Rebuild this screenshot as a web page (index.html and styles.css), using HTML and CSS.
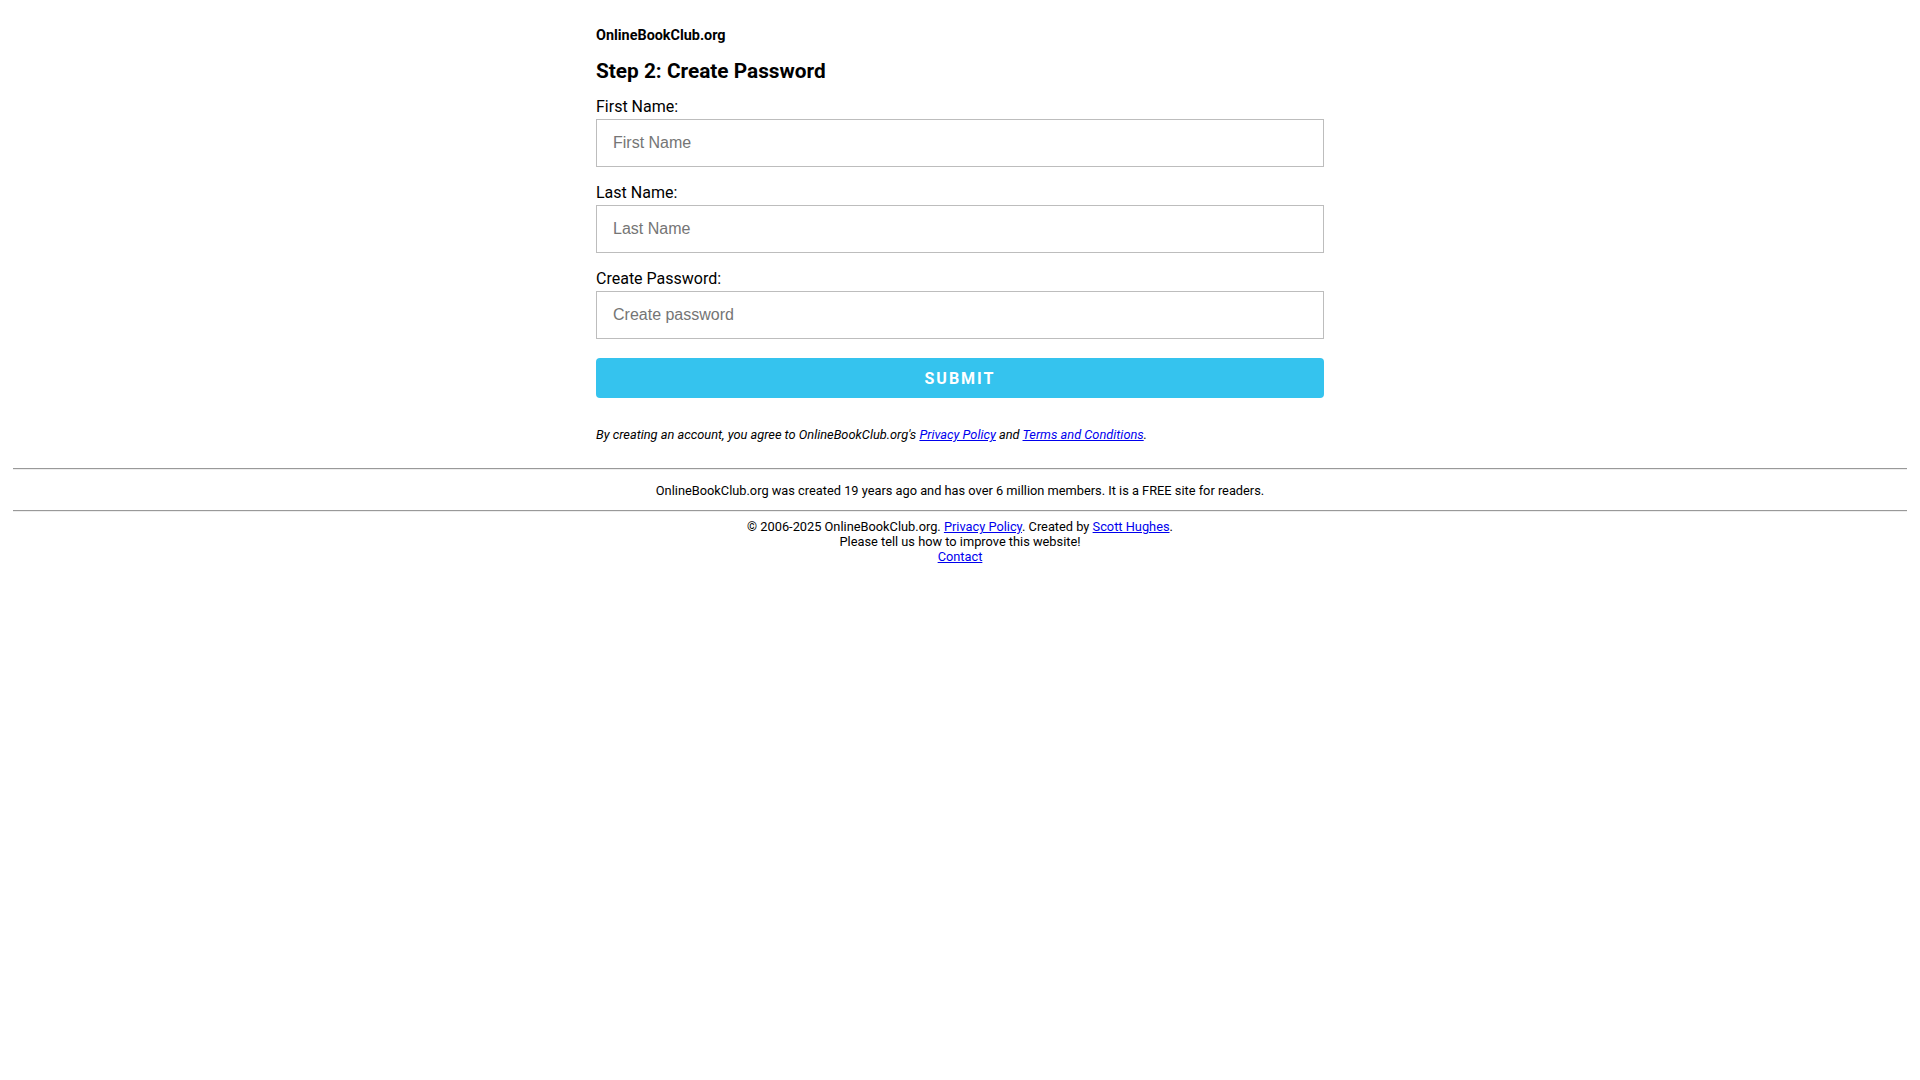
FILE: index.html
```html
<!DOCTYPE html>
<html lang="en">
<head>
<meta charset="utf-8">
<title>Step 2: Create Password - OnlineBookClub.org</title>
<link rel="stylesheet" href="styles.css">
</head>
<body>
<main class="page">
  <div class="brand">OnlineBookClub.org</div>
  <h1 class="title">Step 2: Create Password</h1>
  <form class="form">
    <div class="field">
      <label class="label" for="fn">First Name:</label>
      <input class="input" id="fn" type="text" placeholder="First Name">
    </div>
    <div class="field">
      <label class="label" for="ln">Last Name:</label>
      <input class="input" id="ln" type="text" placeholder="Last Name">
    </div>
    <div class="field">
      <label class="label" for="pw">Create Password:</label>
      <input class="input" id="pw" type="password" placeholder="Create password">
    </div>
    <button class="submit" type="button">SUBMIT</button>
  </form>
  <p class="terms">By creating an account, you agree to OnlineBookClub.org's <a href="#">Privacy Policy</a> and <a href="#">Terms and Conditions</a>.</p>
</main>
<footer class="footer">
  <hr class="rule">
  <p class="about">OnlineBookClub.org was created 19 years ago and has over 6 million members. It is a FREE site for readers.</p>
  <hr class="rule">
  <div class="credits">
    <div>© 2006-2025 OnlineBookClub.org. <a href="#">Privacy Policy</a>. Created by <a href="#">Scott Hughes</a>.</div>
    <div>Please tell us how to improve this website!</div>
    <div><a href="#">Contact</a></div>
  </div>
</footer>
</body>
</html>
```
FILE: styles.css
```css
html, body {
  margin: 0;
  padding: 0;
  background: #fff;
}
body {
  font-family: Roboto, "Liberation Sans", Arial, sans-serif;
  color: #000;
}
.page {
  width: 728px;
  margin: 0 auto;
  padding-top: 27px;
}
.brand {
  font-size: 14.4px;
  font-weight: 700;
  line-height: 17px;
}
.title {
  font-size: 20.8px;
  font-weight: 700;
  line-height: 24px;
  margin: 15px 0 15px;
}
.form {
  display: flex;
  flex-direction: column;
}
.field {
  display: flex;
  flex-direction: column;
  margin-bottom: 16px;
}
.label {
  font-size: 16px;
  line-height: 18px;
  margin-bottom: 3px;
}
.field + .field .label {
  padding-top: 1px;
}
.input {
  box-sizing: border-box;
  width: 100%;
  height: 48px;
  border: 1px solid #bdbdbd;
  border-radius: 0;
  padding: 0 16px;
  font-family: "Liberation Sans", Arial, sans-serif;
  font-size: 16px;
  color: #000;
  background: #fff;
  outline: none;
}
.input::placeholder {
  color: #757575;
}
.submit {
  margin-top: 3px;
  height: 40px;
  width: 100%;
  border: none;
  border-radius: 4px;
  background: #35c3ee;
  color: #fff;
  font-family: Roboto, "Liberation Sans", sans-serif;
  font-size: 16px;
  font-weight: 700;
  letter-spacing: 2px;
  cursor: pointer;
}
.terms {
  font-size: 12.8px;
  font-style: italic;
  line-height: 15px;
  margin: 29px 0 0;
}
a {
  color: #0000ee;
  text-decoration: underline;
}
.footer {
  padding: 26px 13px 0;
  text-align: center;
}
.rule {
  margin: 0;
  border: none;
  border-top: 1px solid #999;
  border-bottom: 1px solid #eee;
  height: 0;
}
.about {
  font-size: 12.8px;
  line-height: 15px;
  margin: 13px 0 12px;
}
.credits {
  font-size: 12.8px;
  line-height: 15px;
  padding-top: 7px;
}
```
